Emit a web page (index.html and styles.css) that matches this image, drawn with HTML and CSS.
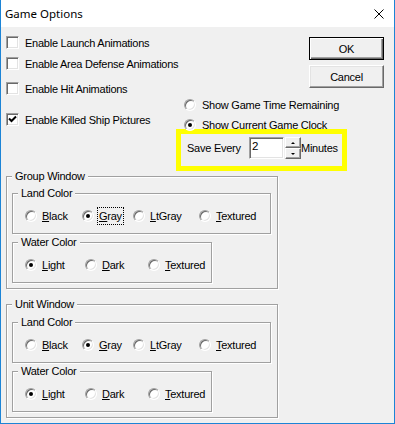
FILE: index.html
```html
<!DOCTYPE html>
<html lang="en">
  <head>
    <meta charset="UTF-8" />
    <title>Game Options</title>
    <link rel="stylesheet" href="styles.css">
  </head>
  <body>
    <div class="window">
      <div class="titlebar">
        <span class="title">Game Options</span>
        <svg class="close" width="10" height="10" viewBox="0 0 10 10">
          <path d="M0.5 0.5 L9.5 9.5 M9.5 0.5 L0.5 9.5" stroke="#000" stroke-width="1" fill="none" />
        </svg>
      </div>

      <div class="content">
        <div class="top">
          <div class="checks">
            <div class="check"><span class="box"></span>Enable Launch Animations</div>
            <div class="check"><span class="box"></span>Enable Area Defense Animations</div>
            <div class="check gap-md"><span class="box"></span>Enable Hit Animations</div>
            <div class="check gap-lg">
              <span class="box">
                <svg width="13" height="13" viewBox="0 0 13 13">
                  <polyline points="3,5.5 5.5,8 10,3.5" stroke="#000" stroke-width="2" fill="none" />
                </svg>
              </span>Enable Killed Ship Pictures
            </div>
          </div>

          <div class="side">
            <div class="buttons">
              <div class="btn default">OK</div>
              <div class="btn">Cancel</div>
            </div>
            <div class="clock">
              <div class="clock-row"><span class="radio"></span>Show Game Time Remaining</div>
              <div class="clock-row"><span class="radio on"></span>Show Current Game Clock</div>
            </div>
            <div class="save">
              <span class="save-label">Save Every</span>
              <span class="edit">2</span>
              <span class="spin">
                <span class="spin-btn"><span class="arrow up"></span></span>
                <span class="spin-btn"><span class="arrow down"></span></span>
              </span>
              <span>Minutes</span>
            </div>
          </div>
        </div>

        <fieldset class="group">
          <legend>Group Window</legend>
          <fieldset class="sub">
            <legend>Land Color</legend>
            <div class="options land">
              <label class="opt"><span class="radio"></span><span class="txt"><u>B</u>lack</span></label>
              <label class="opt"><span class="radio on"></span><span class="txt focus"><u>G</u>ray</span></label>
              <label class="opt"><span class="radio"></span><span class="txt"><u>L</u>tGray</span></label>
              <label class="opt"><span class="radio"></span><span class="txt"><u>T</u>extured</span></label>
            </div>
          </fieldset>
          <fieldset class="sub water">
            <legend>Water Color</legend>
            <div class="options sea">
              <label class="opt"><span class="radio on"></span><span class="txt"><u>L</u>ight</span></label>
              <label class="opt"><span class="radio"></span><span class="txt"><u>D</u>ark</span></label>
              <label class="opt"><span class="radio"></span><span class="txt"><u>T</u>extured</span></label>
            </div>
          </fieldset>
        </fieldset>

        <fieldset class="group unit">
          <legend>Unit Window</legend>
          <fieldset class="sub">
            <legend>Land Color</legend>
            <div class="options land">
              <label class="opt"><span class="radio"></span><span class="txt"><u>B</u>lack</span></label>
              <label class="opt"><span class="radio on"></span><span class="txt"><u>G</u>ray</span></label>
              <label class="opt"><span class="radio"></span><span class="txt"><u>L</u>tGray</span></label>
              <label class="opt"><span class="radio"></span><span class="txt"><u>T</u>extured</span></label>
            </div>
          </fieldset>
          <fieldset class="sub water">
            <legend>Water Color</legend>
            <div class="options sea">
              <label class="opt"><span class="radio on"></span><span class="txt"><u>L</u>ight</span></label>
              <label class="opt"><span class="radio"></span><span class="txt"><u>D</u>ark</span></label>
              <label class="opt"><span class="radio"></span><span class="txt"><u>T</u>extured</span></label>
            </div>
          </fieldset>
        </fieldset>
      </div>
    </div>
  </body>
</html>
```

FILE: styles.css
```css
* {
  margin: 0;
  padding: 0;
  box-sizing: border-box;
}
body {
  background: #fff;
  color: #000;
  font-family: "Liberation Sans", Arial, sans-serif;
  font-size: 11px;
  letter-spacing: -0.25px;
}
.window {
  width: 395px;
  height: 424px;
  border: 1px solid #1c84d6;
  border-top: 0;
  background: #f0f0f0;
  display: flex;
  flex-direction: column;
}
/* title bar */
.titlebar {
  height: 27px;
  flex: none;
  background: #fff;
  display: flex;
  align-items: center;
  justify-content: space-between;
  padding: 0 10px 0 4px;
}
.title {
  font-family: "Noto Sans", sans-serif;
  font-size: 11.5px;
  letter-spacing: 0;
}
.close {
  display: block;
}
/* top area */
.top {
  display: flex;
  height: 144px;
}
.checks {
  width: 175px;
  flex: none;
  padding: 9px 0 0 5px;
}
.check {
  display: flex;
  align-items: center;
  height: 13px;
  white-space: nowrap;
}
.check + .check {
  margin-top: 8px;
}
.check.gap-md {
  margin-top: 12px;
}
.check.gap-lg {
  margin-top: 18px;
}
.box {
  width: 13px;
  height: 13px;
  flex: none;
  margin-right: 6px;
  background: #fff;
  border: 1px solid;
  border-color: #a0a0a0 #fff #fff #a0a0a0;
  box-shadow: inset 1px 1px 0 #696969, inset -1px -1px 0 #e3e3e3;
  position: relative;
}
.box svg {
  position: absolute;
  left: -1px;
  top: -1px;
}
.side {
  flex: 1;
  display: flex;
  flex-direction: column;
}
.buttons {
  align-self: flex-end;
  margin: 10px 10px 0 0;
  display: flex;
  flex-direction: column;
  gap: 5px;
}
.btn {
  width: 75px;
  height: 23px;
  display: flex;
  align-items: center;
  justify-content: center;
  border: 1px solid;
  border-color: #fff #696969 #696969 #fff;
  box-shadow: inset -1px -1px 0 #a0a0a0, inset 1px 1px 0 #e3e3e3;
}
.btn.default {
  border-color: #000;
  box-shadow: inset 1px 1px 0 #fff, inset -1px -1px 0 #696969, inset -2px -2px 0 #a0a0a0;
}
.clock {
  margin-top: 10px;
  padding-left: 8px;
}
.clock-row {
  display: flex;
  align-items: center;
  height: 13px;
  white-space: nowrap;
}
.clock-row + .clock-row {
  margin-top: 7px;
}
.clock-row .radio {
  margin-right: 6px;
}
.radio {
  width: 12px;
  height: 12px;
  flex: none;
  border-radius: 50%;
  background: #fff;
  border: 1px solid;
  border-color: #a0a0a0 #fff #fff #a0a0a0;
  box-shadow: inset 1px 1px 0 #696969, inset -1px -1px 0 #e3e3e3;
  position: relative;
}
.radio.on::after {
  content: "";
  position: absolute;
  left: 3px;
  top: 3px;
  width: 4px;
  height: 4px;
  border-radius: 50%;
  background: #000;
}
/* save every */
.save {
  width: 171px;
  margin-top: -2px;
  border: 5px solid #ffff00;
  display: flex;
  align-items: center;
  padding: 3px 0 7px 6px;
  white-space: nowrap;
}
.save-label {
  width: 62px;
}
.edit {
  width: 35px;
  height: 22px;
  background: #fff;
  border: 1px solid;
  border-color: #a0a0a0 #fff #fff #a0a0a0;
  box-shadow: inset 1px 1px 0 #696969, inset -1px -1px 0 #e3e3e3;
  padding: 2px 0 0 2px;
  font-size: 11.5px;
}
.spin {
  width: 16px;
  margin-left: 1px;
  display: flex;
  flex-direction: column;
}
.spin-btn {
  height: 11px;
  display: flex;
  align-items: center;
  justify-content: center;
  border: 1px solid;
  border-color: #fff #696969 #696969 #fff;
  box-shadow: inset -1px -1px 0 #a0a0a0;
}
.arrow {
  width: 0;
  height: 0;
  border-left: 2px solid transparent;
  border-right: 2px solid transparent;
}
.arrow.up {
  border-bottom: 2px solid #000;
}
.arrow.down {
  border-top: 2px solid #000;
}
/* group boxes */
fieldset {
  min-width: 0;
  border: 1px solid #a0a0a0;
  box-shadow: inset 1px 1px 0 #fff, 1px 1px 0 #fff;
}
legend {
  line-height: 13px;
  padding: 0 3px;
  background: #f0f0f0;
}
.group {
  width: 272px;
  margin: -1px 0 0 5px;
  padding: 4px 6px 5px 5px;
}
.group.unit {
  margin-top: 9px;
  padding-top: 5px;
}
.sub {
  padding: 7px 8px 8px 5px;
}
.sub.water {
  width: 200px;
  margin-top: 2px;
}
.options {
  display: grid;
  padding-left: 7px;
}
.options.land {
  grid-template-columns: 57px 51px 66px auto;
}
.options.sea {
  grid-template-columns: 60px 63px auto;
}
.opt {
  display: flex;
  align-items: center;
  height: 18px;
  white-space: nowrap;
}
.opt .radio {
  margin-right: 3px;
}
.txt {
  line-height: 16px;
  padding: 0 1px;
  border: 1px dotted transparent;
}
.txt.focus {
  border-color: #000;
}
```
